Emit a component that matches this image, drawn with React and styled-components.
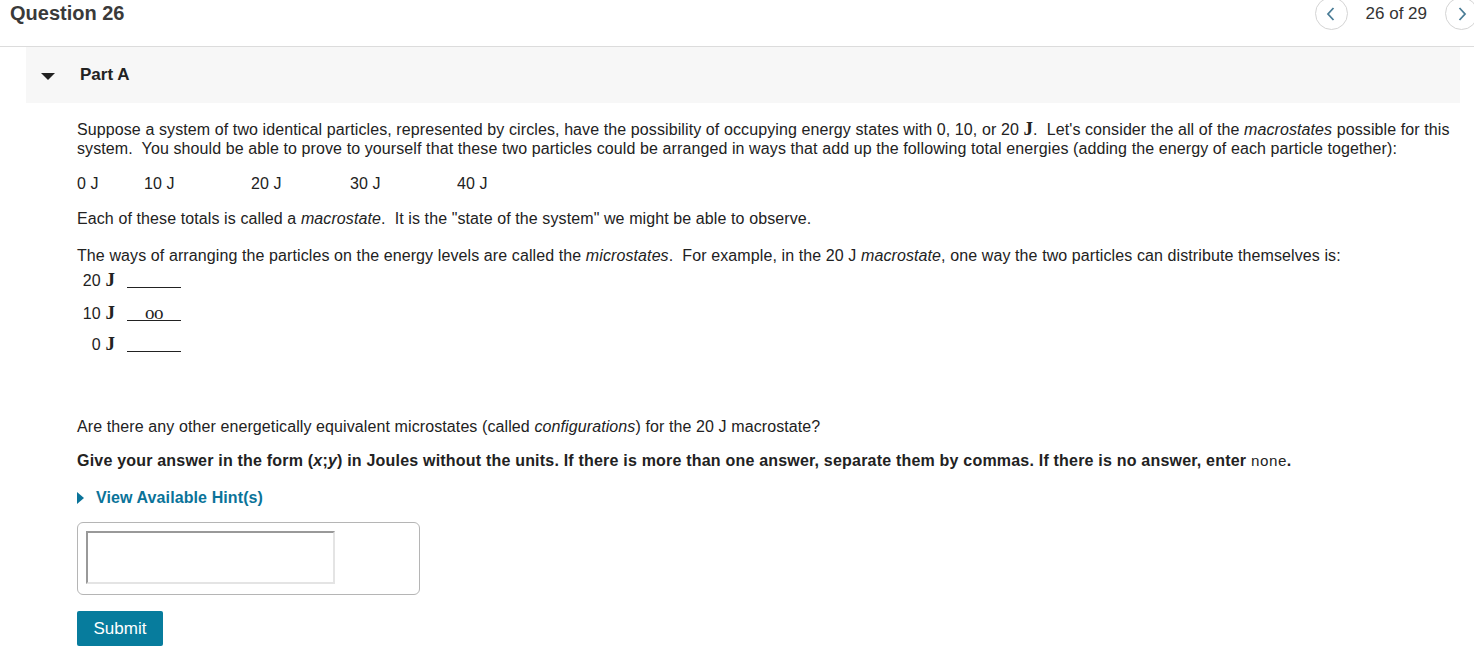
import React from 'react'
import styled, { createGlobalStyle } from 'styled-components'

const Global = createGlobalStyle`
  body {
    margin: 0;
    background: #fff;
    font-family: "Liberation Sans", Arial, sans-serif;
    color: #222;
  }
`

const Header = styled.div`
  height: 46px;
  display: flex;
  align-items: center;
  justify-content: space-between;
  border-bottom: 1px solid #dcdcdc;
  padding-left: 10px;
  overflow: hidden;
`

const Title = styled.h1`
  margin: 0 0 20px;
  font-size: 20px;
  font-weight: bold;
  color: #3a3a3a;
`

const Nav = styled.div`
  display: flex;
  align-items: center;
  gap: 18px;
  margin-right: -4px;
  margin-bottom: 19px;
`

const NavButton = styled.div`
  width: 31px;
  height: 31px;
  border-radius: 50%;
  border: 1px solid #d4d4d4;
  display: flex;
  align-items: center;
  justify-content: center;
`

const Counter = styled.span`
  font-size: 17px;
  color: #333;
`

const PartBar = styled.div`
  margin: 0 14px 0 26px;
  height: 56px;
  background: #f7f7f7;
  display: flex;
  align-items: center;
  padding-left: 15px;
  gap: 11px;
`

const Caret = styled.span`
  width: 0;
  height: 0;
  border-left: 7px solid transparent;
  border-right: 7px solid transparent;
  border-top: 7px solid #222;
  margin-top: 2px;
`

const PartTitle = styled.h2`
  margin: 0 0 1px 14px;
  font-size: 17px;
  font-weight: bold;
  color: #222;
`

const Body = styled.div`
  padding: 16px 14px 0 77px;
  font-size: 16px;
  line-height: 19px;
  letter-spacing: 0.1px;
`

const Para = styled.p`
  margin: ${p => p.$m || '0 0 16px'};
  font-weight: ${p => (p.$bold ? 'bold' : 'normal')};
  letter-spacing: ${p => (p.$bold ? '0.2px' : '0.1px')};
`

const MathJ = styled.span`
  font-family: "Liberation Serif", "Times New Roman", serif;
  font-weight: bold;
  font-size: 19px;
  line-height: 1;
`

const Mono = styled.span`
  font-family: "Liberation Mono", "Courier New", monospace;
  font-weight: normal;
  font-size: 15px;
  letter-spacing: 0;
`

const TotalsRow = styled.div`
  display: flex;
  margin-bottom: 16px;
`

const Total = styled.span`
  width: ${p => p.$w}px;
`

const Levels = styled.div`
  display: grid;
  grid-template-columns: 38px 58px;
  grid-template-rows: 21px 21px 19px;
  column-gap: 12px;
  row-gap: 12px;
  margin: 4px 0 63px;
  align-items: end;
`

const LevelLabel = styled.span`
  text-align: right;
  line-height: 19px;
`

const LevelLine = styled.span`
  border-bottom: 1px solid #222;
  height: 18px;
  width: 54px;
  display: flex;
  justify-content: center;
  align-items: flex-end;
  margin-bottom: 2px;
`

const Particles = styled.span`
  font-family: "Liberation Serif", "Times New Roman", serif;
  font-size: 19px;
  line-height: 15px;
  letter-spacing: -0.5px;
`

const Hint = styled.div`
  display: flex;
  align-items: center;
  gap: 12px;
  color: #0a7399;
  font-weight: bold;
  margin: 4px 0 15px;
`

const HintCaret = styled.span`
  width: 0;
  height: 0;
  border-top: 6px solid transparent;
  border-bottom: 6px solid transparent;
  border-left: 7px solid #0a7399;
`

const AnswerBox = styled.div`
  width: 325px;
  height: 55px;
  border: 1px solid #b5b5b5;
  border-radius: 6px;
  padding: 8px 8px;
`

const Input = styled.div`
  width: 245px;
  height: 49px;
  border: 2px solid #e4e4e4;
  border-top-color: #999;
  border-left-color: #999;
`

const Submit = styled.button`
  margin-top: 16px;
  width: 86px;
  height: 35px;
  background: #077c9d;
  color: #fff;
  border: none;
  border-radius: 2px;
  font-family: "Liberation Sans", Arial, sans-serif;
  font-size: 17px;
  padding: 0;
`

const Chevron = ({ dir }) => (
  <svg width="14" height="16" viewBox="0 0 14 16" fill="none" stroke="#4a7c96" strokeWidth="1.8">
    {dir === 'left' ? <path d="M9.5 2 L4 8 L9.5 14" /> : <path d="M4.5 2 L10 8 L4.5 14" />}
  </svg>
)

const App = () => {
  return (
    <>
      <Global />
      <Header>
        <Title>Question 26</Title>
        <Nav>
          <NavButton><Chevron dir="left" /></NavButton>
          <Counter>26 of 29</Counter>
          <NavButton><Chevron dir="right" /></NavButton>
        </Nav>
      </Header>
      <PartBar>
        <Caret />
        <PartTitle>Part A</PartTitle>
      </PartBar>
      <Body>
        <Para>
          Suppose a system of two identical particles, represented by circles, have the possibility of occupying energy states with 0, 10, or 20 <MathJ>J</MathJ>.&nbsp; Let's consider the all of the <i>macrostates</i> possible for this system.&nbsp; You should be able to prove to yourself that these two particles could be arranged in ways that add up the following total energies (adding the energy of each particle together):
        </Para>
        <TotalsRow>
          <Total $w={67}>0 J</Total>
          <Total $w={107}>10 J</Total>
          <Total $w={99}>20 J</Total>
          <Total $w={107}>30 J</Total>
          <Total $w={60}>40 J</Total>
        </TotalsRow>
        <Para $m="0 0 18px">
          Each of these totals is called a <i>macrostate</i>.&nbsp; It is the "state of the system" we might be able to observe.
        </Para>
        <Para $m="0 0 2px">
          The ways of arranging the particles on the energy levels are called the <i>microstates</i>.&nbsp; For example, in the 20 J <i>macrostate</i>, one way the two particles can distribute themselves is:
        </Para>
        <Levels>
          <LevelLabel>20 <MathJ>J</MathJ></LevelLabel>
          <LevelLine />
          <LevelLabel>10 <MathJ>J</MathJ></LevelLabel>
          <LevelLine><Particles>oo</Particles></LevelLine>
          <LevelLabel>0 <MathJ>J</MathJ></LevelLabel>
          <LevelLine />
        </Levels>
        <Para $m="0 0 15px">
          Are there any other energetically equivalent microstates (called <i>configurations</i>) for the 20 J macrostate?
        </Para>
        <Para $bold>
          Give your answer in the form (<i>x</i>;<i>y</i>) in Joules without the units. If there is more than one answer, separate them by commas. If there is no answer, enter <Mono>none</Mono>.
        </Para>
        <Hint>
          <HintCaret />
          View Available Hint(s)
        </Hint>
        <AnswerBox>
          <Input />
        </AnswerBox>
        <Submit>Submit</Submit>
      </Body>
    </>
  )
}

export default App
